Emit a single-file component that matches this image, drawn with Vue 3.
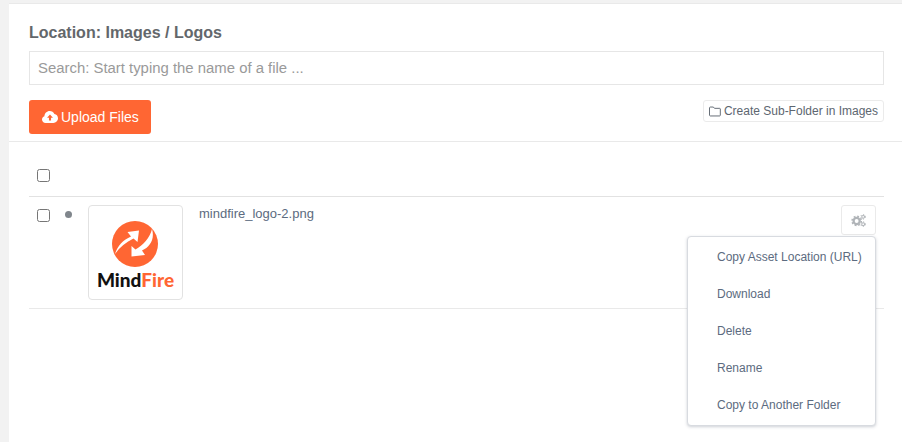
<template>
  <div class="page">
    <div class="panel">
      <header class="top">
        <h2 class="location">Location: Images / Logos</h2>
        <input class="search" type="text" placeholder="Search: Start typing the name of a file ..." />
        <div class="actions">
          <button type="button" class="upload">
            <svg class="cloud" viewBox="0 0 20 15" width="16" height="12">
              <path fill="#fff" fill-rule="evenodd" d="M4.500 15C2 15 0 13.100 0 10.700c0-1.900 1.200-3.500 3-4.100C3.200 3 6 0 9.600 0c2.600 0 4.900 1.600 5.900 3.900C18 4.200 20 6.400 20 9.200 20 12.400 17.400 15 14.200 15H4.500zM10 4.500 6.300 8.400h2.400V12h2.600V8.400h2.400L10 4.500z" />
            </svg>
            Upload Files
          </button>
          <button type="button" class="subfolder">
            <svg viewBox="0 0 14 12" width="12" height="11" class="folder">
              <path fill="none" stroke="#5d6670" stroke-width="1.100" d="M1.500.8h3.600l1.300 1.500h6c.5 0 .8.300.8.800v7.200c0 .5-.3.900-.8.900H1.500c-.5 0-.9-.4-.9-.9V1.700c0-.5.400-.9.900-.9z" />
            </svg>
            Create Sub-Folder in Images
          </button>
        </div>
      </header>

      <section class="files">
        <div class="head-row">
          <input type="checkbox" class="check" />
        </div>
        <div class="file-row">
          <input type="checkbox" class="check" />
          <span class="dot"></span>
          <div class="thumb">
            <svg viewBox="0 0 46 46" width="46" height="46" class="mark">
              <circle cx="23" cy="23" r="23" fill="#ff6633" />
              <path fill="#fff" d="M3 33C6 24 11 19 19 15.500L15.500 11 27 9.500 25.500 21 21.500 17.500C14 21 8 26 3 33z" />
              <path fill="#fff" d="M40 8C43 18 38 26 30 29.500L33 34 19.500 35.500 19.500 25 23.500 28.500C31 24 38 17 40 8z" />
            </svg>
            <span class="word"><b>Mind</b><i>Fire</i></span>
          </div>
          <a class="name">mindfire_logo-2.png</a>
          <div class="file-menu">
            <button type="button" class="gear">
              <svg viewBox="0 0 16 14" width="15" height="13">
                <g fill="none" stroke="#b0b4b8">
                  <circle cx="6" cy="7.500" r="3.300" stroke-width="2.400" />
                  <circle cx="6" cy="7.500" r="5" stroke-width="1.600" stroke-dasharray="2 1.930" />
                  <circle cx="13" cy="3" r="1.500" stroke-width="1.100" />
                  <circle cx="13" cy="3" r="2.500" stroke-width="1" stroke-dasharray="1.200 1.420" />
                  <circle cx="13" cy="11" r="1.500" stroke-width="1.100" />
                  <circle cx="13" cy="11" r="2.500" stroke-width="1" stroke-dasharray="1.200 1.420" />
                </g>
              </svg>
            </button>
            <ul class="menu">
              <li v-for="item in menuItems" :key="item">{{ item }}</li>
            </ul>
          </div>
        </div>
      </section>
    </div>
  </div>
</template>

<script setup>
const menuItems = [
  'Copy Asset Location (URL)',
  'Download',
  'Delete',
  'Rename',
  'Copy to Another Folder'
]
</script>

<style>
html, body {
  margin: 0;
  background: #f2f2f2;
}
</style>

<style scoped>
.page {
  height: 442px;
  padding: 3px 0 0 9px;
  box-sizing: border-box;
  overflow: hidden;
  font-family: "Liberation Sans", Arial, sans-serif;
}
.panel {
  height: 439px;
  background: #fff;
  border-top: 1px solid #e9e9e9;
  box-sizing: border-box;
}
.top {
  padding: 0 18px 7px 20px;
  border-bottom: 1px solid #e9e9e9;
}
.location {
  margin: 0;
  padding-top: 20px;
  height: 27px;
  font-size: 16px;
  line-height: 17px;
  font-weight: 700;
  color: #63676b;
}
.search {
  display: block;
  width: 100%;
  height: 34px;
  box-sizing: border-box;
  padding: 0 8px;
  border: 1px solid #e6e6e6;
  font: 14.900px "Liberation Sans", Arial, sans-serif;
  outline: none;
  color: #555;
}
.search::placeholder {
  color: #9a9a9a;
  opacity: 1;
}
.actions {
  display: flex;
  justify-content: space-between;
  margin-top: 15px;
}
.upload {
  display: flex;
  align-items: center;
  gap: 3px;
  height: 34px;
  width: 122px;
  padding: 0 0 0 13px;
  border: 0;
  border-radius: 3px;
  background: #ff6633;
  color: #fff;
  font: 14px "Liberation Sans", Arial, sans-serif;
}
.subfolder {
  display: flex;
  align-items: center;
  gap: 3px;
  height: 22px;
  padding: 0 5px;
  border: 1px solid #ebebeb;
  border-radius: 3px;
  background: #fff;
  color: #5d6670;
  font: 12px "Liberation Sans", Arial, sans-serif;
}
.files {
  padding: 0 18px 0 20px;
}
.head-row {
  height: 55px;
  box-sizing: border-box;
  display: flex;
  align-items: center;
  padding: 13px 0 0 8px;
  border-bottom: 1px solid #e2e2e2;
}
.check {
  width: 13px;
  height: 13px;
  margin: 0;
  flex: none;
}
.file-row {
  display: flex;
  align-items: flex-start;
  height: 112px;
  padding: 8px 0 0 8px;
  box-sizing: border-box;
  border-bottom: 1px solid #e9e9e9;
}
.file-row > .check {
  margin-top: 4px;
}
.dot {
  flex: none;
  width: 7px;
  height: 7px;
  margin: 6px 0 0 15px;
  border-radius: 50%;
  background: #80868c;
}
.thumb {
  flex: none;
  width: 95px;
  height: 95px;
  margin-left: 16px;
  box-sizing: border-box;
  border: 1px solid #e2e2e2;
  border-radius: 4px;
  display: flex;
  flex-direction: column;
  align-items: center;
  padding-top: 15px;
}
.mark {
  display: block;
  margin-right: 1px;
}
.word {
  font-family: Lato, sans-serif;
  font-size: 19px;
  line-height: 20px;
  margin-top: 3px;
  font-weight: 900;
  white-space: nowrap;
}
.word b {
  color: #111;
  font-weight: 900;
}
.word i {
  font-style: normal;
  color: #ff6633;
}
.name {
  margin: 1px 0 0 16px;
  font-size: 13px;
  line-height: 15px;
  color: #5c6b80;
}
.file-menu {
  position: relative;
  margin-left: auto;
  margin-right: 8px;
}
.gear {
  display: flex;
  align-items: center;
  justify-content: center;
  width: 35px;
  height: 30px;
  padding: 0;
  border: 1px solid #eaeaea;
  border-radius: 3px;
  background: #fff;
}
.menu {
  position: absolute;
  top: 31px;
  right: 0;
  width: 189px;
  height: 190px;
  box-sizing: border-box;
  margin: 0;
  padding: 2px 0 0;
  list-style: none;
  background: #fff;
  border-radius: 4px;
  border: 1px solid #d8dbe0;
  box-shadow: 0 1px 3px rgba(90, 100, 120, .3);
  z-index: 2;
}
.menu li {
  padding-left: 29px;
  font-size: 12px;
  line-height: 37px;
  color: #5c6b80;
  white-space: nowrap;
}
</style>
